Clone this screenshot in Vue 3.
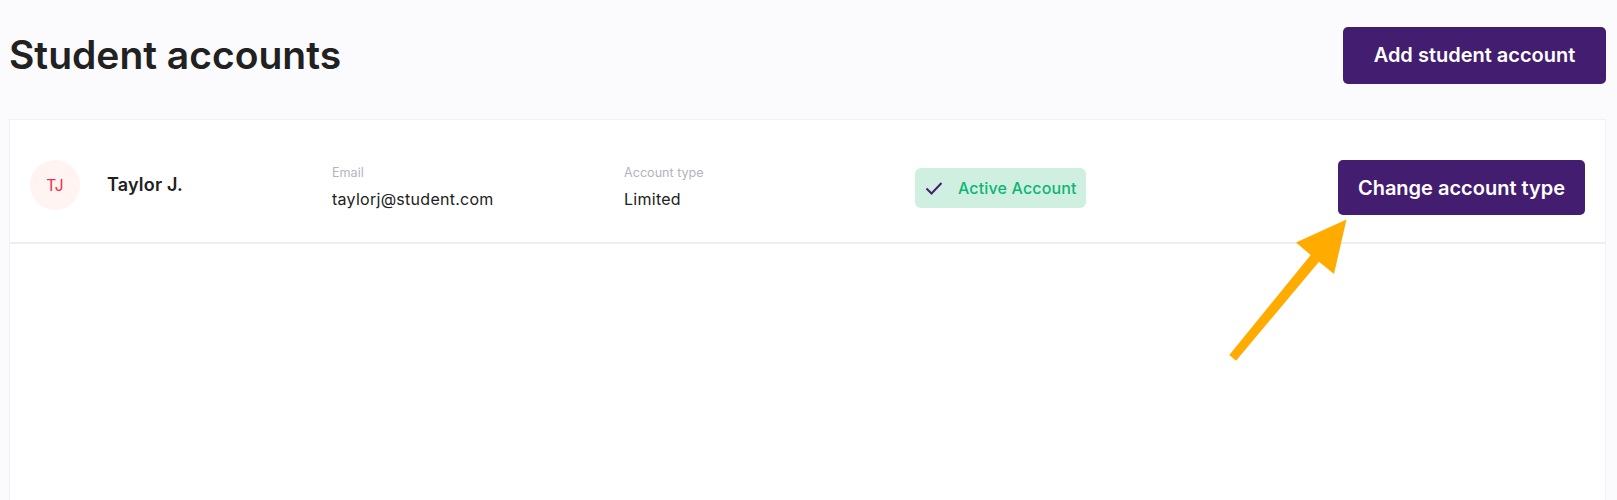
<template>
  <div class="page">
    <header class="top">
      <h1 class="title">Student accounts</h1>
      <button class="btn btn-add">Add student account</button>
    </header>
    <section class="card">
      <div class="row">
        <div class="avatar">TJ</div>
        <div class="name">Taylor J.</div>
        <div v-for="f in fields" :key="f.label" class="field" :class="f.cls">
          <div class="label">{{ f.label }}</div>
          <div class="value">{{ f.value }}</div>
        </div>
        <div class="badge">
          <svg class="check" width="18" height="14" viewBox="0 0 18 14" fill="none">
            <path d="M1.5 7.5L6.5 12.5L16.5 2" stroke="#451e72" stroke-width="2" />
          </svg>
          <span>Active Account</span>
        </div>
        <button class="btn btn-change">Change account type</button>
      </div>
    </section>
    <svg class="arrow" width="1617" height="500" viewBox="0 0 1617 500">
      <path
        d="M1346.5 219.5L1296 242.5L1310.7 255L1229.3 355L1236 360.7L1319 261.7L1334 274Z"
        fill="#ffab00"
      />
    </svg>
  </div>
</template>

<script setup>
const fields = [
  { label: 'Email', value: 'taylorj@student.com', cls: 'field-email' },
  { label: 'Account type', value: 'Limited', cls: 'field-type' }
]
</script>

<style>
html,
body {
  margin: 0;
  background: #fbfbfd;
}
</style>

<style scoped>
.page {
  position: relative;
  height: 500px;
  overflow: hidden;
  padding: 0 11px 0 9px;
  box-sizing: border-box;
  font-family: Inter, 'Liberation Sans', sans-serif;
  color: #212121;
}

.top {
  display: flex;
  justify-content: space-between;
  align-items: flex-start;
  height: 119px;
  padding-top: 27px;
  box-sizing: border-box;
}

.title {
  margin: 0;
  font-size: 39px;
  line-height: 55px;
  font-weight: 600;
}

.btn {
  border: 0;
  border-radius: 5px;
  background: #431d70;
  color: #fff;
  font-family: inherit;
  font-size: 20px;
  font-weight: 600;
}

.btn-add {
  width: 263px;
  height: 57px;
  padding-bottom: 2px;
}

.btn-change {
  width: 247px;
  height: 55px;
  margin-left: auto;
  padding-top: 2px;
}

.card {
  height: 381px;
  background: #fff;
  border: 1px solid #f1f1f4;
  border-bottom: 0;
  box-sizing: border-box;
}

.row {
  display: flex;
  align-items: center;
  height: 124px;
  padding: 12px 20px 0;
  border-bottom: 2px solid #eeeef0;
  box-sizing: border-box;
}

.avatar {
  flex: none;
  width: 50px;
  height: 50px;
  margin-bottom: 4px;
  border-radius: 50%;
  background: #fff4f2;
  color: #f42a4a;
  font-size: 15.5px;
  display: flex;
  align-items: center;
  justify-content: center;
}

.name {
  width: 225px;
  margin-left: 27px;
  margin-bottom: 6px;
  flex: none;
  font-size: 18px;
  font-weight: 600;
  letter-spacing: 0.2px;
}

.field-email {
  width: 292px;
  flex: none;
}

.field-type {
  width: 291px;
  flex: none;
}

.label {
  font-size: 12.6px;
  line-height: 16px;
  color: #b5b3bd;
}

.value {
  margin-top: 8px;
  font-size: 16px;
  line-height: 20px;
  letter-spacing: 0.27px;
  color: #212121;
}

.badge {
  display: flex;
  align-items: center;
  flex: none;
  width: 171px;
  height: 40px;
  margin-top: 2px;
  padding-left: 10px;
  box-sizing: border-box;
  border-radius: 6px;
  background: #cff0e1;
  color: #0fb573;
  font-size: 16px;
  font-weight: 500;
  letter-spacing: 0.15px;
}

.check {
  margin-right: 15px;
}

.arrow {
  position: absolute;
  left: 0;
  top: 0;
  pointer-events: none;
}
</style>
